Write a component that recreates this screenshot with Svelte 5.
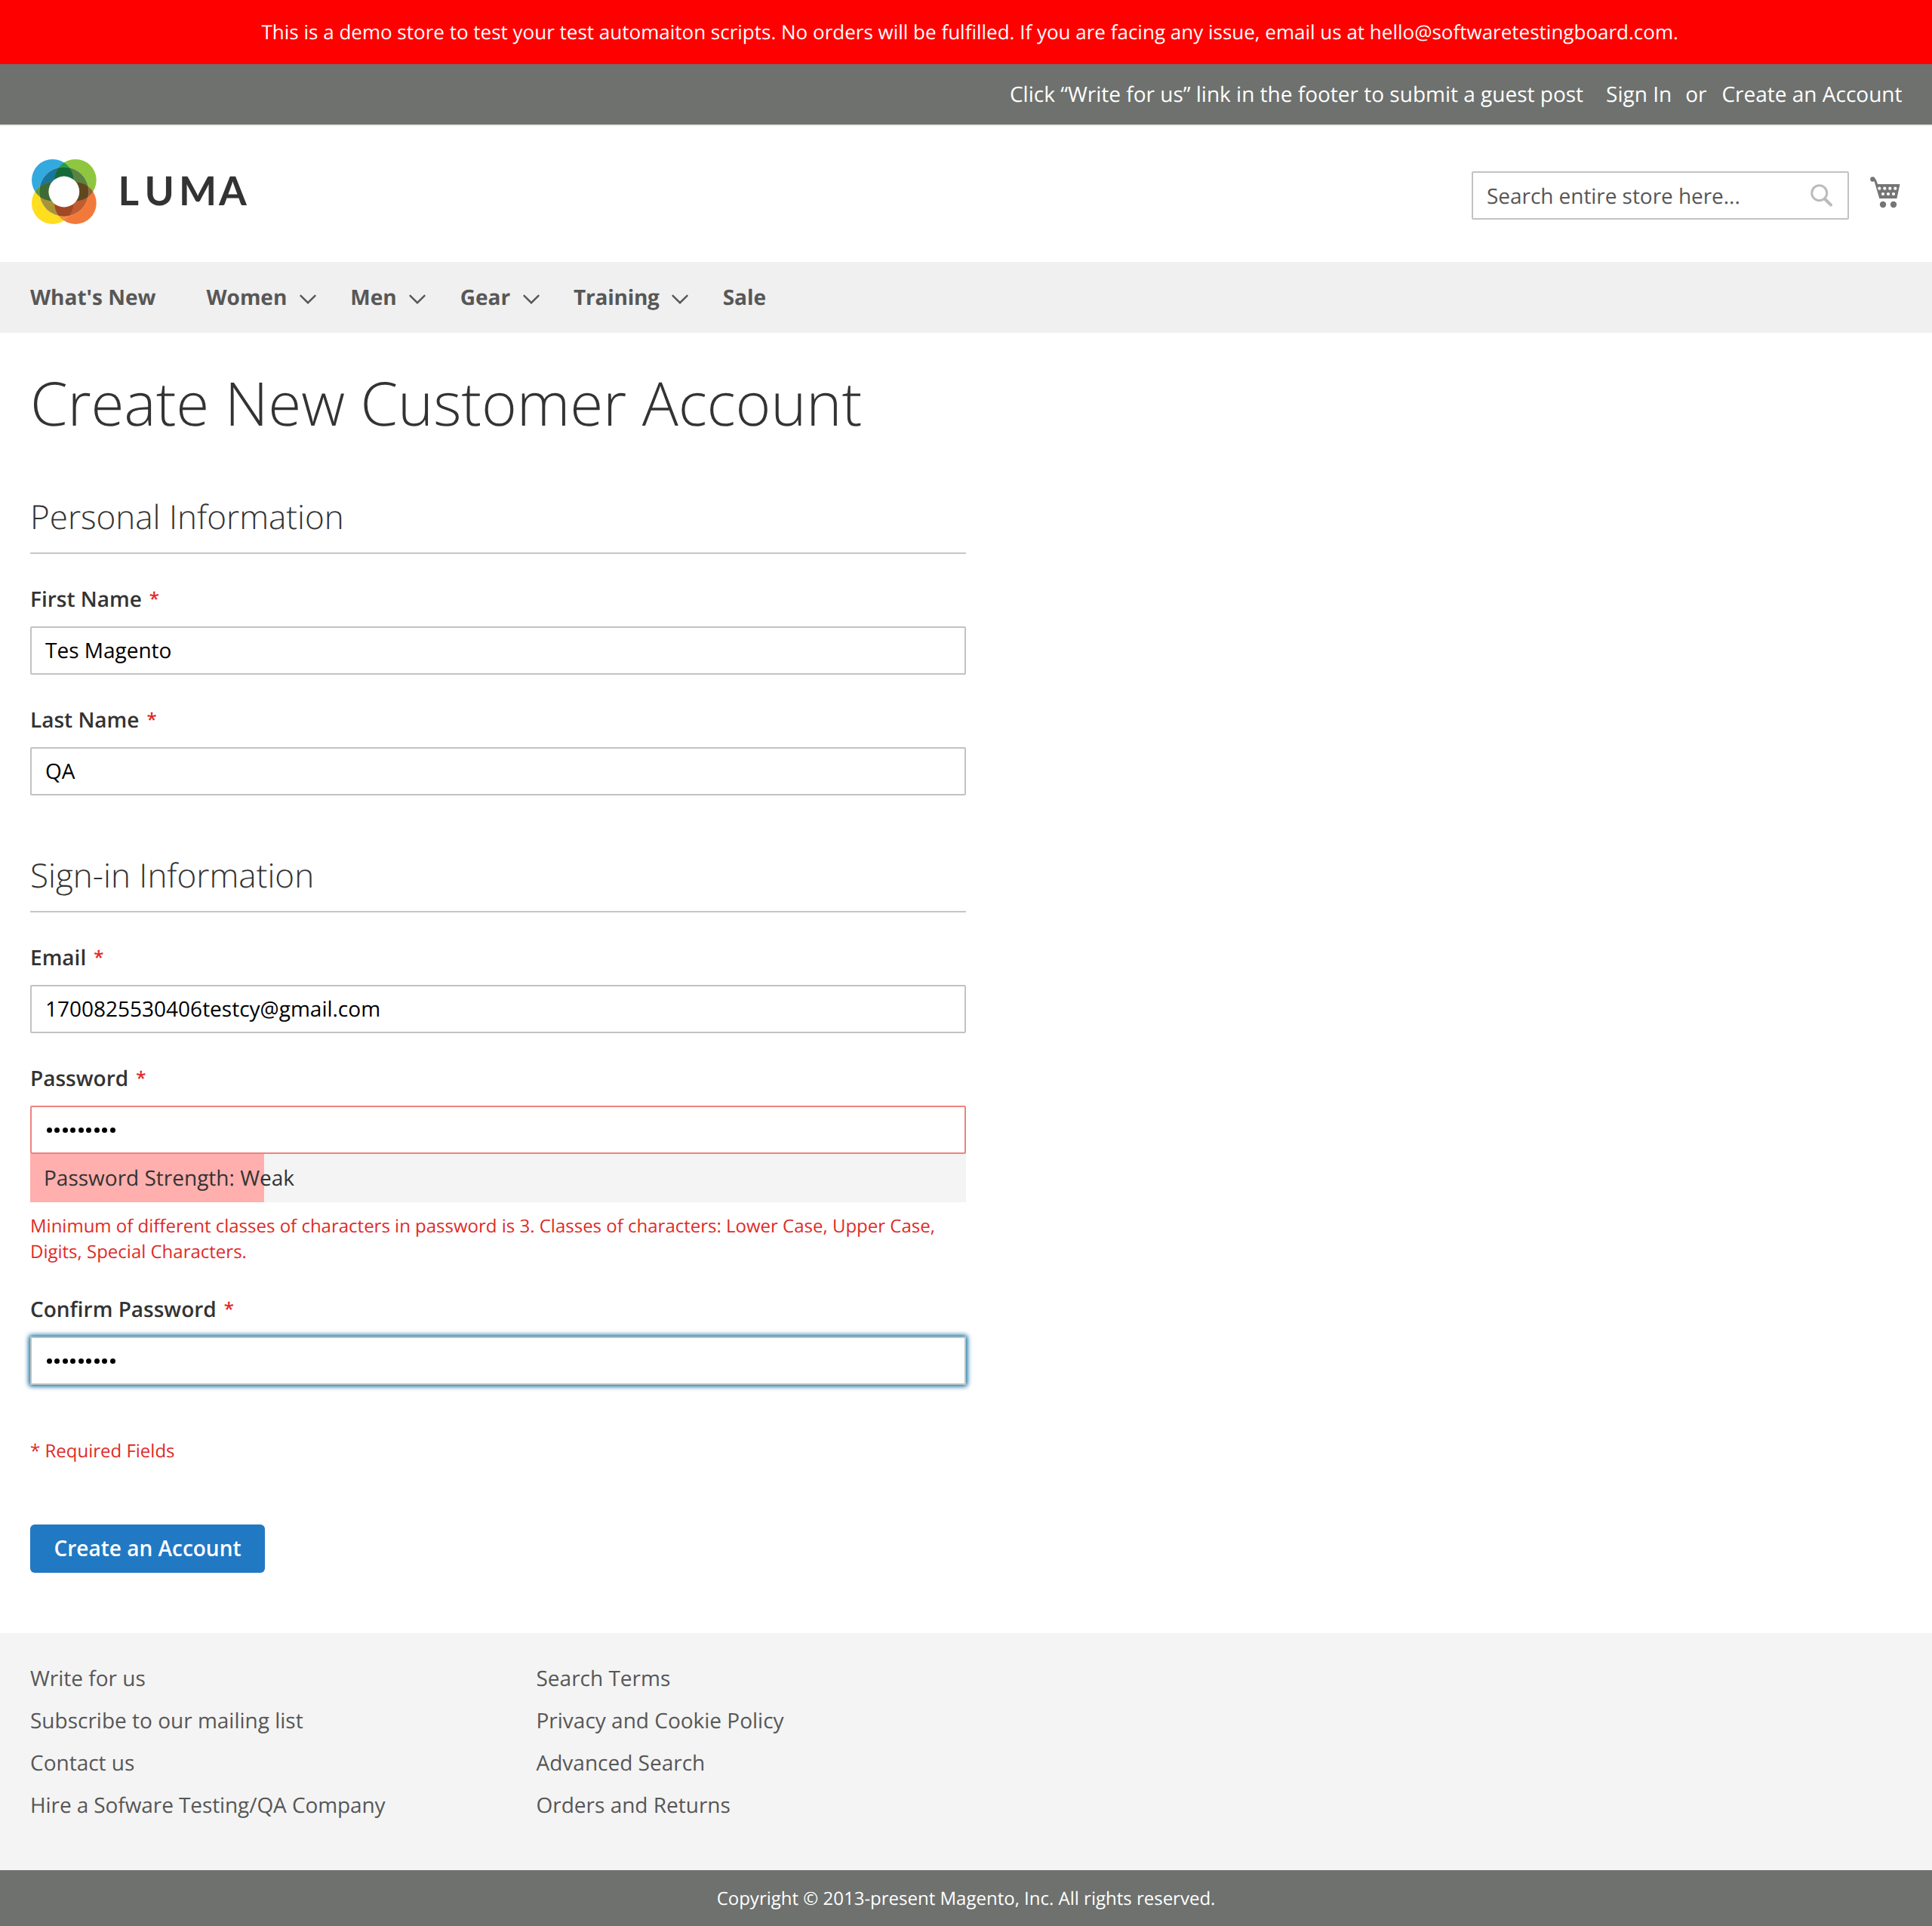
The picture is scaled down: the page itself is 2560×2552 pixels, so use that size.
<script>
  const nav = [
    { label: "What's New", menu: false },
    { label: 'Women', menu: true },
    { label: 'Men', menu: true },
    { label: 'Gear', menu: true },
    { label: 'Training', menu: true, tight: true },
    { label: 'Sale', menu: false }
  ];
  const footerColumns = [
    ['Write for us', 'Subscribe to our mailing list', 'Contact us', 'Hire a Sofware Testing/QA Company'],
    ['Search Terms', 'Privacy and Cookie Policy', 'Advanced Search', 'Orders and Returns']
  ];
  const dots = Array.from({ length: 9 });
  const strength = 25;
</script>

{#snippet label(text)}
  <div class="label"><span>{text}</span><span class="star">*</span></div>
{/snippet}

{#snippet masked()}
  <div class="dots">
    {#each dots as _}<i></i>{/each}
  </div>
{/snippet}

<div class="page">
  <div class="notice"><span>This is a demo store to test your test automaiton scripts. No orders will be fulfilled. If you are facing any issue, email us at hello@softwaretestingboard.com.</span></div>

  <div class="panel">
    <span class="welcome">Click “Write for us” link in the footer to submit a guest post</span>
    <span class="signin">Sign In</span>
    <span class="or">or</span>
    <span class="create">Create an Account</span>
  </div>

  <header>
    <svg class="logo" viewBox="0 0 300 90" width="300" height="90" role="img" aria-label="Luma">
      <defs>
        <clipPath id="c-blue"><circle cx="29.7" cy="29.7" r="27.7" /></clipPath>
        <clipPath id="c-orange"><circle cx="60" cy="60.2" r="27.7" /></clipPath>
        <clipPath id="c-ring"><circle cx="44.8" cy="45" r="32.8" /></clipPath>
      </defs>
      <circle cx="29.7" cy="29.7" r="27.7" fill="#33a9e0" />
      <circle cx="60" cy="29.7" r="27.7" fill="#8ec640" />
      <circle cx="29.7" cy="60.2" r="27.7" fill="#ffdd1f" />
      <circle cx="60" cy="60.2" r="27.7" fill="#f3793b" />
      <g clip-path="url(#c-blue)">
        <circle cx="60" cy="29.7" r="27.7" fill="#1fa04a" />
        <circle cx="29.7" cy="60.2" r="27.7" fill="#57953f" />
      </g>
      <g clip-path="url(#c-orange)">
        <circle cx="60" cy="29.7" r="27.7" fill="#95653a" />
        <circle cx="29.7" cy="60.2" r="27.7" fill="#f68a3a" />
      </g>
      <g clip-path="url(#c-ring)">
        <circle cx="29.7" cy="29.7" r="27.7" fill="#1a759b" />
        <circle cx="60" cy="29.7" r="27.7" fill="#5a8240" />
        <circle cx="29.7" cy="60.2" r="27.7" fill="#a89337" />
        <circle cx="60" cy="60.2" r="27.7" fill="#c05c2f" />
        <g clip-path="url(#c-blue)">
          <circle cx="60" cy="29.7" r="27.7" fill="#146b3a" />
          <circle cx="29.7" cy="60.2" r="27.7" fill="#3d6b33" />
        </g>
        <g clip-path="url(#c-orange)">
          <circle cx="60" cy="29.7" r="27.7" fill="#5f471f" />
          <circle cx="29.7" cy="60.2" r="27.7" fill="#a14825" />
        </g>
      </g>
      <g fill="none" stroke="#fff" stroke-opacity=".35" stroke-width=".5">
        <circle cx="44.8" cy="45" r="32.8" />
      </g>
      <circle cx="44.8" cy="45" r="20.4" fill="#fff" />
      <text class="wordmark" x="116.500 151.500 197 250" y="63">LUMA</text>
    </svg>

    <div class="tools">
      <div class="search">
        <span>Search entire store here...</span>
        <svg width="32" height="32" viewBox="0 0 32 32" fill="none" stroke="#bbb">
          <circle cx="12.700" cy="12.700" r="10" stroke-width="3" />
          <path d="M19.800 20.500 28 28.500" stroke-width="4" stroke-linecap="round" />
        </svg>
      </div>
      <svg class="cart" width="42" height="44" viewBox="0 0 42 44" fill="#757575">
        <path d="M3.300 4.200 L6.200 4.800 Q7.600 5.200 8.200 7 L10 12 H39 Q39.500 12 39.400 12.600 L35.400 31 H12.300 L5.500 8 Z" />
        <circle cx="3.400" cy="5.500" r="3.200" />
        <circle cx="17" cy="39" r="4.200" /><circle cx="31" cy="39" r="4.200" />
        <g fill="#fff">
          <circle cx="12.300" cy="17.700" r="2.100" /><circle cx="19.300" cy="17.700" r="2.100" /><circle cx="26.300" cy="17.700" r="2.100" /><circle cx="33.300" cy="17.700" r="2.100" />
          <circle cx="17" cy="25" r="2.100" /><circle cx="24" cy="25" r="2.100" /><circle cx="31" cy="25" r="2.100" />
        </g>
      </svg>
    </div>
  </header>

  <nav>
    {#each nav as item}
      <div class="item" class:tight={item.tight}>
        <span>{item.label}</span>
        {#if item.menu}
          <svg width="22" height="14" viewBox="0 0 22 14" fill="none" stroke="#575757" stroke-width="2.400"><path d="M.800 1.200 11 11.200 21.200 1.200" /></svg>
        {/if}
      </div>
    {/each}
  </nav>

  <main>
    <h1>Create New Customer Account</h1>

    <section>
      <h2>Personal Information</h2>
      {@render label('First Name')}
      <div class="input">Tes Magento</div>
      {@render label('Last Name')}
      <div class="input">QA</div>
    </section>

    <section class="second">
      <h2>Sign-in Information</h2>
      {@render label('Email')}
      <div class="input">1700825530406testcy@gmail.com</div>
      {@render label('Password')}
      <div class="input invalid">{@render masked()}</div>
      <div class="meter">
        <div class="bar" style="width: {strength}%"></div>
        <span>Password Strength: Weak</span>
      </div>
      <p class="error">Minimum of different classes of characters in password is 3. Classes of characters: Lower Case, Upper Case, Digits, Special Characters.</p>
      {@render label('Confirm Password')}
      <div class="input focused">{@render masked()}</div>
    </section>

    <p class="required">* Required Fields</p>
    <button type="button">Create an Account</button>
  </main>

  <footer>
    {#each footerColumns as links}
      <ul>
        {#each links as link}<li class:narrow={link.length > 30}>{link}</li>{/each}
      </ul>
    {/each}
  </footer>
  <div class="copyright">Copyright © 2013-present Magento, Inc. All rights reserved.</div>
</div>

<style>
  :global(body) { background: #fff; }
  .page, .page * { box-sizing: border-box; }
  .page {
    width: 2560px;
    height: 2552px;
    display: flex;
    flex-direction: column;
    overflow: hidden;
    font-family: 'Open Sans', sans-serif;
    font-size: 28px;
    line-height: 40px;
    color: #333;
    white-space: nowrap;
    text-rendering: geometricPrecision;
  }
  h1, h2, p, ul { margin: 0; padding: 0; font-weight: 400; }
  .notice {
    height: 85px;
    background: #f00;
    color: #fff;
    font-size: 26px;
    display: flex;
    align-items: center;
    padding: 0 0 2px 346.500px;
  }
  .panel {
    height: 82px;
    background: #6e716e;
    border-bottom: 2px solid #e8e8e8;
    color: #fff;
    display: flex;
    align-items: center;
    justify-content: flex-end;
    padding: 0 39.500px 0 0;
  }
  .signin { margin-left: 30px; }
  .or { margin: 0 20px 0 18px; }
  header {
    height: 180px;
    display: flex;
    justify-content: space-between;
    padding: 42px 40px 0;
  }
  .wordmark { font-family: Lato, sans-serif; font-weight: 700; font-size: 53px; fill: #333; }
  .tools { display: flex; padding-top: 18px; }
  .search {
    width: 500px;
    height: 64px;
    border: 2px solid #c2c2c2;
    border-radius: 2px;
    padding: 0 18px;
    display: flex;
    align-items: center;
    justify-content: space-between;
    color: #575757;
  }
  .search span { padding-top: 1px; letter-spacing: -0.050px; }
  .cart { margin: 5px 0 0 28px; }
  nav {
    height: 94px;
    background: #f0f0f0;
    display: flex;
    align-items: center;
    padding: 0 40px;
    font-weight: 700;
    color: #575757;
  }
  .item { display: flex; align-items: center; margin-right: 45.300px; }
  .item:first-child { margin-right: 67px; }
  .item svg { margin: 6px 0 0 16.700px; }
  .tight span { letter-spacing: -0.250px; }
  main {
    height: 1723px;
    padding: 0 40px;
    display: flex;
    flex-direction: column;
    align-items: flex-start;
  }
  h1 { font-size: 80px; font-weight: 300; line-height: 88px; margin-top: 49px; letter-spacing: -0.120px; }
  section { width: 1240px; margin-top: 80px; display: flex; flex-direction: column; }
  .second { margin-top: 79px; }
  h2 {
    font-size: 44px;
    font-weight: 300;
    line-height: 52px;
    height: 76px;
    border-bottom: 2px solid #c6c6c6;
    margin-bottom: 40px;
  }
  .label { font-weight: 600; height: 56px; display: flex; align-items: flex-start; }
  .star { color: #e02b27; font-size: 24px; margin-left: 10px; }
  .input {
    height: 64px;
    border: 2px solid #c2c2c2;
    border-radius: 2px;
    padding: 0 18px;
    color: #000;
    line-height: 60px;
    display: flex;
    align-items: center;
  }
  .input + .label { margin-top: 40px; }
  .invalid { border-color: #ed8380; }
  .focused { box-shadow: 0 0 6px 2px #00699d; }
  .dots { display: flex; gap: 3.570px; padding-left: 1.500px; }
  .dots i { width: 7px; height: 7px; border-radius: 50%; background: #000; }
  .meter {
    height: 64px;
    background: #f4f4f4;
    display: grid;
    align-items: center;
  }
  .meter > * { grid-area: 1 / 1; }
  .meter span { padding-left: 18px; }
  .bar { height: 64px; background: #ffafae; }
  .error { color: #e02b27; font-size: 24px; line-height: 34px; margin: 15px 0 39px; white-space: normal; }
  .required { color: #e02b27; font-size: 24px; line-height: 34px; margin-top: 71px; }
  button {
    margin: 80px 0 0;
    width: 311px;
    height: 64px;
    padding: 0 0 2px;
    border: 0;
    border-radius: 6px;
    background: #2279c3;
    color: #fff;
    font: 600 28px/32px 'Open Sans', sans-serif;
  }
  footer { height: 314px; background: #f4f4f4; display: flex; padding: 40px 40px 0; color: #575757; }
  ul { list-style: none; width: 670.500px; }
  li { height: 56px; }
  .narrow { letter-spacing: -0.090px; }
  .copyright {
    height: 74px;
    background: #6e716e;
    color: #fff;
    font-size: 24px;
    display: flex;
    align-items: center;
    justify-content: center;
    padding-top: 1px;
  }
</style>
